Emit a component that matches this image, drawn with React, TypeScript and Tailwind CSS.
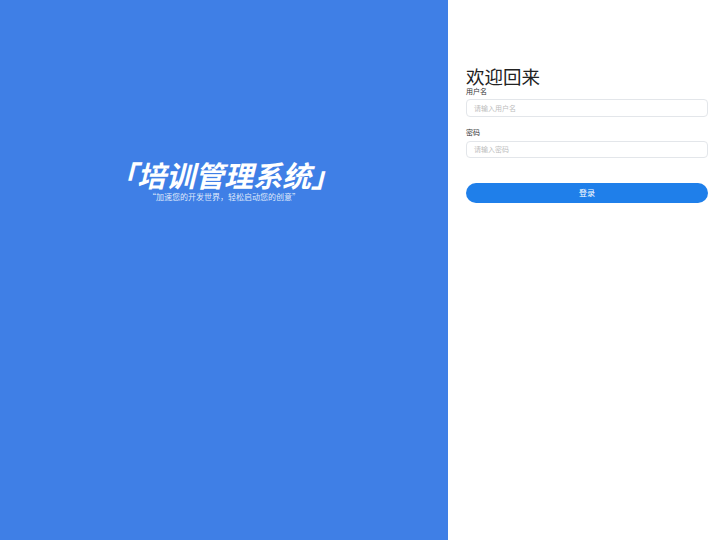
export default function App() {
  const font = { fontFamily: '"Noto Sans CJK SC", "Noto Sans", sans-serif' };
  return (
    <div className="flex h-[540px] w-[720px] overflow-hidden bg-white" style={font}>
      <div className="flex w-[448px] shrink-0 flex-col items-center bg-[#3f7fe6] pt-[157px]">
        <div className="text-[29px] font-bold italic leading-[34px] text-white">「培训管理系统」</div>
        <div className="mt-[1px] text-[8px] leading-[10px] text-[#dfe9fb]">“加速您的开发世界，轻松启动您的创意”</div>
      </div>
      <div className="flex flex-1 flex-col pl-[18px] pr-[12px] pt-[65px]">
        <div className="text-[18.5px] leading-[22px] text-[#222]">欢迎回来</div>
        <div className="mt-[0px] text-[7px] leading-[9px] text-[#333]">用户名</div>
        <div className="mt-[3px] flex h-[18px] items-center rounded-[4px] border border-[#e3e6ea] px-[7px] text-[7px] text-[#bdbdbd]">请输入用户名</div>
        <div className="mt-[10px] text-[7px] leading-[10px] text-[#333]">密码</div>
        <div className="mt-[4px] flex h-[17px] items-center rounded-[4px] border border-[#e3e6ea] px-[7px] text-[7px] text-[#bdbdbd]">请输入密码</div>
        <div className="mt-[25px] flex h-[20px] items-center justify-center rounded-full bg-[#1f7fea] text-[8px] text-white">登录</div>
      </div>
    </div>
  );
}
